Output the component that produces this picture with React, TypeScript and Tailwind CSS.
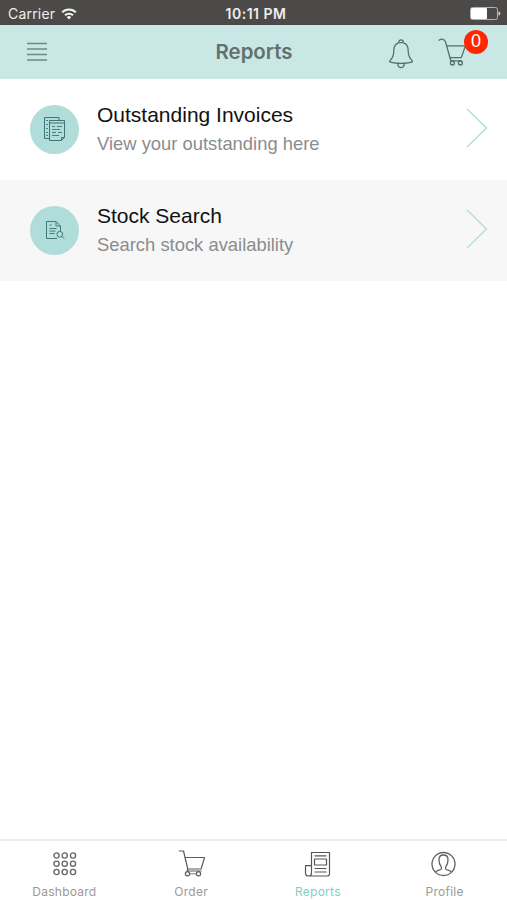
import type { ReactNode } from "react";

function WifiIcon() {
  return (
    <svg width="16" height="12" viewBox="0 0 16 12" className="block">
      <g fill="none" stroke="#f4f4f4" strokeWidth="2">
        <path d="M1.2 4.4a9.6 9.6 0 0 1 13.6 0" />
        <path d="M4 7.3a5.7 5.7 0 0 1 8 0" />
      </g>
      <path d="M5.8 9.2a3.1 3.1 0 0 1 4.4 0L8 11.4z" fill="#f4f4f4" />
    </svg>
  );
}

function BatteryIcon() {
  return (
    <svg width="31" height="13" viewBox="0 0 31 13" className="block">
      <rect x="0.5" y="0.5" width="27" height="12" rx="2" fill="none" stroke="#b4b4b2" />
      <rect x="1" y="1" width="16" height="11" rx="1" fill="#fff" />
      <path d="M28.5 4.5c1.2.3 1.8 1 1.8 2s-.6 1.7-1.8 2z" fill="#d5d5d3" />
    </svg>
  );
}

function BellIcon() {
  return (
    <svg width="26" height="30" viewBox="0 0 26 30" fill="none" stroke="#53706e" strokeWidth="1.3" strokeLinejoin="round" className="block">
      <path d="M10.8 3.6V3a2.2 2.2 0 0 1 4.4 0v.6z" />
      <path d="M10.5 3.8C7.5 4.8 6 7.2 5.9 10.5c-.1 4.8-.6 7.3-2.7 9.6C2.2 21.2 1.4 21.9 1.5 22.6c2.5 1.3 6.7 1.7 11.5 1.7s9-.4 11.5-1.7c.1-.7-.7-1.4-1.7-2.5-2.1-2.3-2.6-4.8-2.7-9.6C20 7.2 18.5 4.8 15.5 3.8" />
      <path d="M9.8 24.5c.1 2.8 1.4 4.2 3.2 4.2s3.1-1.4 3.2-4.2" />
    </svg>
  );
}

function HeaderCartIcon() {
  return (
    <svg width="30" height="30" viewBox="0 0 30 30" fill="none" stroke="#53706e" strokeWidth="1.3" strokeLinecap="round" strokeLinejoin="round" className="block">
      <path d="M1 2.2C3.6.5 6.500.9 7.500 3.900L12.500 21.500q.5 1.800 2 1.800" />
      <path d="M9 7.800h18.500l-4.200 11.800H12" />
      <path d="M14 22.900h9.500" />
      <circle cx="14.400" cy="25" r="2" />
      <circle cx="22.400" cy="25" r="2" />
    </svg>
  );
}

function InvoicesIcon() {
  return (
    <svg width="23" height="26" viewBox="0 0 23 26" fill="none" stroke="#3f7375" strokeWidth="1" strokeLinejoin="round" className="block">
      <path d="M6 22.500H1.500v-21H16v3" />
      <path d="M6.500 4.500h15v17l-3 3h-12z" />
      <path d="M6.500 7h15M18.500 24.500v-3h3" />
      <path d="M3 4.500h2M3 8.500h2M3 12.500h2M3 16.500h2M3 19.500h2M9 10.500h3M14 10.500h5M9 13.500h8M9 16.500h4M15 16.500h4M9 19.500h7" strokeWidth=".9" />
    </svg>
  );
}

function StockIcon() {
  return (
    <svg width="20" height="20" viewBox="0 0 20 20" fill="none" stroke="#427a7b" strokeWidth="1" strokeLinejoin="round" className="block">
      <path d="M12 18.500H1.500v-17h9.500L15.500 6v5" />
      <path d="M11 1.500V6h4.500M4.500 5h2M4.500 8.500h7M4.500 11h6M4.500 13.500h5" />
      <circle cx="14.800" cy="14.300" r="2.900" />
      <path d="M16.900 16.400 19.200 18.700" />
    </svg>
  );
}

function DashboardIcon() {
  const steps = [3.5, 11.7, 20];
  return (
    <svg width="24" height="24" viewBox="0 0 24 24" fill="none" stroke="#696969" strokeWidth="1.4" className="ml-[3px] block">
      {steps.map((y) => steps.map((x) => <circle key={`${x}-${y}`} cx={x} cy={y} r="2.6" />))}
    </svg>
  );
}

function OrderIcon() {
  return (
    <svg width="28" height="28" viewBox="0 0 28 28" fill="none" stroke="#5c5c5c" strokeWidth="1.2" strokeLinejoin="round" className="ml-[3px] block">
      <path d="M.8 1h4.700L9.800 19 9 21.500" />
      <path d="M6.800 7.500h19.700l-3.400 11.500H9.800M9.500 21h14" />
      <circle cx="9.500" cy="23.800" r="2.100" />
      <circle cx="20.500" cy="23.800" r="2.100" />
      <path d="M11.700 23.800h6.700" strokeWidth=".8" />
    </svg>
  );
}

function ReportsIcon() {
  return (
    <svg width="27" height="27" viewBox="0 0 27 27" fill="none" stroke="#565656" strokeWidth="1.2" strokeLinejoin="round" className="ml-[2px] block">
      <path d="M7.500 22V1.500h18v21.300q0 2.200-2.400 2.200H4.200Q1.500 25 1.500 22v-7.300h6V22q0 3-3.300 3" />
      <rect x="10.500" y="8" width="12" height="6" />
      <path d="M10.500 4.800h12M10.500 17.500h12M10.500 21h12" />
    </svg>
  );
}

function ProfileIcon() {
  return (
    <svg width="26" height="26" viewBox="0 0 26 26" fill="none" stroke="#616161" strokeWidth="1.3" strokeLinejoin="round" className="block">
      <circle cx="12.500" cy="13" r="11.500" />
      <path d="M4.500 21c1-1.200 3.500-1.700 5.300-2.500.8-.4.800-2.300.1-3.300C8.300 13.300 8 11.300 8 8.700 8 5.500 9.700 4 12.500 4S17 5.500 17 8.700c0 2.600-.3 4.600-1.900 6.500-.7 1-.7 2.900.1 3.300 1.800.8 4.300 1.300 5.300 2.500" />
    </svg>
  );
}

function Row({ icon, title, subtitle, shaded }: { icon: ReactNode; title: ReactNode; subtitle: ReactNode; shaded?: boolean }) {
  return (
    <li className={`flex h-[101px] items-start pl-[30px] pr-[19px] pt-[25.5px] ${shaded ? "bg-[#f7f7f7]" : "bg-white"}`}>
      <div className="flex size-[49px] shrink-0 items-center justify-center rounded-full bg-[#b0ddd9]">{icon}</div>
      <div className="ml-[18px] flex-1 whitespace-nowrap">
        <div className="-mt-0.5 h-[29px] text-[21px] leading-6 text-[#111]">{title}</div>
        <div className="text-[18.4px] leading-6 text-[#8c8c8c]">{subtitle}</div>
      </div>
      <svg width="22" height="40" viewBox="0 0 22 40" fill="none" stroke="#b5e0d8" strokeWidth="1.5" className="mt-[3.5px] block">
        <path d="M1 1 20.500 20 1 39" />
      </svg>
    </li>
  );
}

function Tab({ icon, label, active }: { icon: ReactNode; label: ReactNode; active?: boolean }) {
  return (
    <button className="flex flex-1 flex-col items-center">
      <span className="flex h-[43px] items-center pt-[3px]">{icon}</span>
      <span className={`pl-[2px] font-[Inter,sans-serif] text-[12px] leading-4 tracking-[0.25px] ${active ? "text-[#7fd0c1]" : "text-[#9a9a9a]"}`}>{label}</span>
    </button>
  );
}

export default function App() {
  return (
    <div className="flex h-[900px] w-[507px] flex-col overflow-hidden bg-white font-['Liberation_Sans',Arial,sans-serif]">
      <div className="grid h-[25px] shrink-0 grid-cols-3 items-center bg-[#4b4a48] pt-0.5 font-[Inter,sans-serif] text-[14px] text-[#eee]">
        <div className="flex items-center gap-[6px] pl-2">
          <span className="tracking-[0.2px]">Carrier</span>
          <WifiIcon />
        </div>
        <div className="pl-[5px] text-center font-semibold tracking-[0.5px]">10:11 PM</div>
        <div className="flex justify-end pr-[6px]"><BatteryIcon /></div>
      </div>
      <header className="grid h-[54px] shrink-0 grid-cols-3 items-center bg-[#c9e7e4]">
        <svg width="20" height="19" viewBox="0 0 20 19" stroke="#6c8a87" strokeWidth="1.3" className="-mt-px ml-[27px] block">
          <path d="M0 1.500h20M0 7h20M0 12.500h20M0 18h20" />
        </svg>
        <h1 className="pl-px pt-px text-center font-[Inter,sans-serif] text-[20.4px] font-semibold text-[#62706f]">Reports</h1>
        <div className="flex justify-end pr-[39px] pt-[2px]">
          <div className="mr-[24px] pt-px"><BellIcon /></div>
          <div className="relative">
            <HeaderCartIcon />
            <span className="absolute -top-[8px] left-[26px] flex size-6 items-center justify-center rounded-full bg-[#ff2600] text-[18px] text-white">0</span>
          </div>
        </div>
      </header>
      <ul className="flex-1">
        <Row icon={<InvoicesIcon />} title="Outstanding Invoices" subtitle="View your outstanding here" />
        <Row shaded icon={<StockIcon />} title="Stock Search" subtitle="Search stock availability" />
      </ul>
      <nav className="flex h-[61px] shrink-0 border-t-2 border-[#ececec] bg-white">
        <Tab icon={<DashboardIcon />} label="Dashboard" />
        <Tab icon={<OrderIcon />} label="Order" />
        <Tab active icon={<ReportsIcon />} label="Reports" />
        <Tab icon={<ProfileIcon />} label="Profile" />
      </nav>
    </div>
  );
}
